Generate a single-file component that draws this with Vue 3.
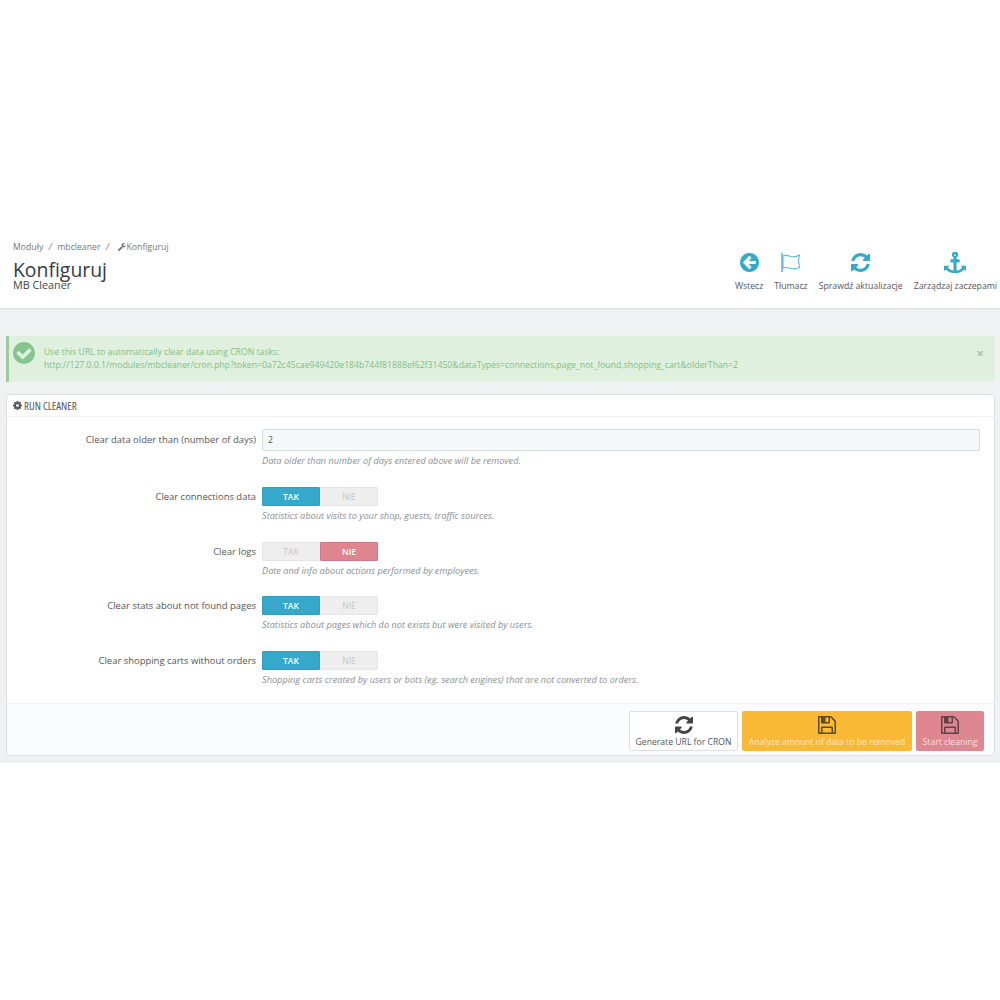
<script setup>
const rows = [
  { label: 'Clear connections data', help: 'Statistics about visits to your shop, guests, traffic sources.', on: true },
  { label: 'Clear logs', help: 'Date and info about actions performed by employees.', on: false },
  { label: 'Clear stats about not found pages', help: 'Statistics about pages which do not exists but were visited by users.', on: true },
  { label: 'Clear shopping carts without orders', help: 'Shopping carts created by users or bots (eg. search engines) that are not converted to orders.', on: true },
]
const sync = 'M1639 1056q0 5-1 7-64 268-268 434.500t-478 166.500q-146 0-282.500-55t-243.500-157l-129 129q-19 19-45 19t-45-19-19-45v-448q0-26 19-45t45-19h448q26 0 45 19t19 45-19 45l-137 137q71 66 161 102t187 36q134 0 250-65t186-179q11-17 53-117 8-23 30-23h192q13 0 22.500 9.500t9.500 22.500zm25-800v448q0 26-19 45t-45 19h-448q-26 0-45-19t-19-45 19-45l138-138q-148-137-349-137-134 0-250 65t-186 179q-11 17-53 117-8 23-30 23h-199q-13 0-22.500-9.500t-9.500-22.500v-7q65-268 270-434.500t480-166.500q146 0 284 55.500t245 156.500l130-129q19-19 45-19t45 19 19 45z'
const floppy = 'M512 1536h768v-384h-768v384zm896 0h128v-896q0-14-10-38.500t-20-34.500l-281-281q-10-10-34-20t-39-10v416q0 40-28 68t-68 28h-576q-40 0-68-28t-28-68v-416h-128v1280h128v-416q0-40 28-68t68-28h832q40 0 68 28t28 68v416zm-384-928v-320q0-13-9.500-22.500t-22.500-9.500h-192q-13 0-22.500 9.500t-9.500 22.500v320q0 13 9.500 22.500t22.500 9.500h192q13 0 22.500-9.500t9.500-22.500zm640 32v928q0 40-28 68t-68 28h-1344q-40 0-68-28t-28-68v-1344q0-40 28-68t68-28h928q40 0 88 20t76 48l280 280q28 28 48 76t20 88z'
</script>

<template>
  <div class="page">
    <header class="head">
      <div class="titles">
        <div class="crumbs">
          <span>Moduły</span><span class="sep">/</span><span>mbcleaner</span><span class="sep">/</span>
          <svg class="wrench" viewBox="128 128 1600 1600"><path d="M448 1472q0-26-19-45t-45-19-45 19-19 45 19 45 45 19 45-19 19-45zm644-420l-682 682q-37 37-90 37-52 0-91-37l-106-108q-38-36-38-90 0-53 38-91l681-681q39 98 114.500 173.500t173.500 114.500zm634-435q0 39-23 106-47 134-164.500 217.500t-258.500 83.500q-185 0-316.500-131.500t-131.500-316.500 131.500-316.500 316.500-131.500q58 0 121.500 16.500t107.500 46.500q16 11 16 28t-16 28l-293 169v224l193 107q5-3 79-48.500t135.500-81 70.500-35.500q15 0 23.500 10t8.500 25z" fill="#777"/></svg>
          <span>Konfiguruj</span>
        </div>
        <h1>Konfiguruj</h1>
        <div class="sub">MB Cleaner</div>
      </div>
      <nav class="tools">
        <a class="tool">
          <svg viewBox="128 128 1536 1536" width="19" height="19"><path d="M1408 960v-128q0-26-19-45t-45-19h-502l189-189q19-19 19-45t-19-45l-91-91q-18-18-45-18t-45 18l-362 362-91 91q-18 18-18 45t18 45l91 91 362 362q18 18 45 18t45-18l91-91q18-18 18-45t-18-45l-189-189h502q26 0 45-19t19-45zm256-64q0 209-103 385.500t-279.500 279.500-385.500 103-385.500-103-279.500-279.500-103-385.500 103-385.500 279.500-279.500 385.500-103 385.500 103 279.500 279.500 103 385.500z" fill="#36a9cb"/></svg>
          <span>Wstecz</span>
        </a>
        <a class="tool">
          <svg viewBox="0 0 20 19" width="20" height="19"><path d="M1 0v19" stroke="#36a9cb" stroke-width="1.300" fill="none"/><path d="M2 3c3-1.500 5-.5 8 .5 3 .8 5.500.3 8.500-1.500l-1 6 1 6.500c-3 1.500-5.500 1.800-8.500 1-3-1-5-1.800-8-.5z" stroke="#5fb9d4" stroke-width="1.100" fill="none"/></svg>
          <span>Tłumacz</span>
        </a>
        <a class="tool">
          <svg viewBox="128 128 1536 1536" width="19" height="19"><path :d="sync" fill="#36a9cb"/></svg>
          <span>Sprawdź aktualizacje</span>
        </a>
        <a class="tool">
          <svg viewBox="0 0 1792 1792" width="22" height="22" class="anchor"><path d="M960 256q0-26-19-45t-45-19-45 19-19 45 19 45 45 19 45-19 19-45zm832 888v352q0 22-20 30-8 2-12 2-12 0-23-9l-93-93q-119 143-318.500 226.500t-429.500 83.500-429.500-83.500-318.500-226.500l-93 93q-9 9-23 9-4 0-12-2-20-8-20-30v-352q0-14 9-23t23-9h352q22 0 30 20 8 19-7 35l-100 100q67 91 189.500 153.500t271.500 82.500v-647h-192q-26 0-45-19t-19-45v-128q0-26 19-45t45-19h192v-163q-58-34-93-92.500t-35-128.500q0-106 75-181t181-75 181 75 75 181q0 70-35 128.500t-93 92.500v163h192q26 0 45 19t19 45v128q0 26-19 45t-45 19h-192v647q149-20 271.500-82.500t189.500-153.500l-100-100q-15-16-7-35 8-20 30-20h352q14 0 23 9t9 23z" fill="#36a9cb"/></svg>
          <span>Zarządzaj zaczepami</span>
        </a>
      </nav>
    </header>

    <main class="content">
      <div class="alert">
        <svg class="check" viewBox="128 128 1536 1536" width="22" height="22"><path d="M1412 734q0-28-18-46l-91-90q-19-19-45-19t-45 19l-408 407-226-226q-19-19-45-19t-45 19l-91 90q-18 18-18 46 0 27 18 45l362 362q19 19 45 19 27 0 46-19l543-543q18-18 18-45zm252 162q0 209-103 385.500t-279.500 279.500-385.500 103-385.500-103-279.500-279.500-103-385.500 103-385.500 279.500-279.500 385.500-103 385.500 103 279.500 279.500 103 385.500z" fill="#86c48f"/></svg>
        <div class="alert-text">
          <div>Use this URL to automatically clear data using CRON tasks:</div>
          <div>http://127.0.0.1/modules/mbcleaner/cron.php?token=0a72c45cae949420e184b744f81888ef62f31450&amp;dataTypes=connections,page_not_found,shopping_cart&amp;olderThan=2</div>
        </div>
        <span class="close">×</span>
      </div>

      <section class="panel">
        <div class="panel-head">
          <svg viewBox="128 128 1536 1536" width="9" height="9"><path d="M1152 896q0-106-75-181t-181-75-181 75-75 181 75 181 181 75 181-75 75-181zm512-109v222q0 12-8 23t-20 13l-185 28q-19 54-39 91 35 50 107 138 10 12 10 25t-9 23q-27 37-99 108t-94 71q-12 0-26-9l-138-108q-44 23-91 38-16 136-29 186-7 28-36 28h-222q-14 0-24.500-8.500t-11.500-21.500l-28-184q-49-16-90-37l-141 107q-10 9-25 9-14 0-25-11-126-114-165-168-7-10-7-23 0-12 8-23 15-21 51-66.500t54-70.500q-27-50-41-99l-183-27q-13-2-21-12.500t-8-23.500v-222q0-12 8-23t19-13l186-28q14-46 39-92-40-57-107-138-10-12-10-24 0-10 9-23 26-36 98.500-107.500t94.500-71.500q13 0 26 10l138 107q44-23 91-38 16-136 29-186 7-28 36-28h222q14 0 24.500 8.500t11.500 21.500l28 184q49 16 90 37l142-107q9-9 24-9 13 0 25 10 129 119 165 170 7 8 7 22 0 12-8 23-15 21-51 66.500t-54 70.500q26 50 41 98l183 28q13 2 21 12.500t8 23.500z" fill="#555"/></svg>
          <span>RUN CLEANER</span>
        </div>

        <div class="form">
          <div class="row first">
            <label>Clear data older than (number of days)</label>
            <div class="field">
              <div class="input">2</div>
              <p class="help">Data older than number of days entered above will be removed.</p>
            </div>
          </div>
          <div class="row" v-for="r in rows" :key="r.label">
            <label>{{ r.label }}</label>
            <div class="field">
              <div class="switch">
                <span class="opt" :class="{ yes: r.on }">TAK</span>
                <span class="opt" :class="{ no: !r.on }">NIE</span>
              </div>
              <p class="help">{{ r.help }}</p>
            </div>
          </div>
        </div>

        <div class="panel-foot">
          <button class="btn plain">
            <svg viewBox="128 128 1536 1536" width="18" height="18"><path :d="sync" fill="#444"/></svg>
            <span>Generate URL for CRON</span>
          </button>
          <button class="btn amber">
            <svg viewBox="128 128 1536 1536" width="18" height="18"><path :d="floppy" fill="#5b4a2a"/></svg>
            <span>Analyze amount of data to be removed</span>
          </button>
          <button class="btn rose">
            <svg viewBox="128 128 1536 1536" width="18" height="18"><path :d="floppy" fill="#5e4247"/></svg>
            <span>Start cleaning</span>
          </button>
        </div>
      </section>
    </main>
  </div>
</template>

<style>
html, body { margin: 0; background: #fff; }
</style>

<style scoped>
.page {
  width: 1000px;
  height: 1000px;
  padding-top: 230px;
  box-sizing: border-box;
  font-family: "Open Sans", "Noto Sans", sans-serif;
  color: #555;
  font-size: 8.650px;
  background: #fff;
}
.head {
  height: 79px;
  box-sizing: border-box;
  border-bottom: 1px solid #dfe1e3;
  display: flex;
  justify-content: space-between;
  padding: 10px 3px 0 13px;
}
.crumbs {
  display: flex;
  align-items: center;
  height: 14px;
  color: #777;
  font-size: 8.700px;
}
.sep { margin: 0 5.500px; font-style: italic; }
.wrench { width: 8px; height: 8px; margin: 0 1px 0 3px; }
h1 {
  margin: 6px 0 0;
  font-size: 19.400px;
  line-height: 20px;
  font-weight: 400;
  color: #363a41;
}
.sub { font-size: 10.800px; line-height: 10px; color: #444; }
.tools { display: flex; gap: 11px; padding-top: 13px; }
.tool {
  display: flex;
  flex-direction: column;
  align-items: center;
  color: #555;
  font-size: 8.700px;
  line-height: 12px;
}
.tool svg { height: 19px; margin-bottom: 8px; }
.tool svg.anchor { height: 22px; margin: -1px 0 6px; }
.content {
  background: #eff1f2;
  height: 454px;
  box-sizing: border-box;
  padding: 27px 5px 0 6px;
}
.alert {
  height: 46px;
  box-sizing: border-box;
  background: #dff0de;
  border-left: 3px solid #9ccba0;
  display: flex;
  align-items: center;
  padding: 0 12px 0 4px;
  color: #7fbf85;
  font-size: 8.690px;
  line-height: 13px;
  position: relative;
}
.check { align-self: flex-start; margin: 6px 9px 0 0; flex: none; }
.alert-text { flex: 1; }
.close { position: absolute; right: 11px; top: 10px; font-size: 13px; line-height: 14px; color: #a9bfae; font-weight: 700; }
.panel {
  margin-top: 12px;
  height: 362px;
  box-sizing: border-box;
  background: #fff;
  border: 1px solid #dcdfe1;
  border-radius: 4px;
  display: flex;
  flex-direction: column;
}
.panel-head {
  height: 21px;
  flex: none;
  border-bottom: 1px solid #eef0f1;
  display: flex;
  align-items: center;
  gap: 2px;
  padding-left: 6px;
  font-size: 11px;
  font-stretch: condensed;
  color: #555;
}
.form { flex: 1; min-height: 0; padding-top: 12px; }
.row {
  display: grid;
  grid-template-columns: 249px 718px;
  column-gap: 6px;
  height: 54.600px;
}
.row.first { height: 58px; }
label {
  text-align: right;
  font-size: 9.450px;
  line-height: 20px;
  color: #555;
}
.first label { line-height: 22px; }
.input {
  height: 22px;
  box-sizing: border-box;
  border: 1px solid #d3dde3;
  border-radius: 2px;
  background: #f5f8f9;
  padding: 0 5px;
  line-height: 20px;
  font-size: 8.650px;
}
.switch {
  width: 116px;
  height: 19px;
  display: flex;
  background: #eee;
  border-radius: 2px;
  box-shadow: 0 0 0 1px #e4e4e4 inset;
}
.opt {
  flex: 1;
  text-align: center;
  line-height: 19px;
  color: #c6c6c6;
  font-size: 8.500px;
  border-radius: 2px;
}
.opt.yes { background: #36a9cb; color: #fff; font-weight: 600; box-shadow: 0 0 0 1px #2f9dbd inset; }
.opt.no { background: #df8590; color: #fff; font-weight: 600; box-shadow: 0 0 0 1px #cf7682 inset; }
.help {
  margin: 3px 0 0;
  font-size: 9.200px;
  line-height: 13px;
  font-style: italic;
  color: #8a8f93;
}
.panel-foot {
  height: 52px;
  flex: none;
  box-sizing: border-box;
  background: #fbfcfd;
  border-top: 1px solid #eef0f1;
  border-radius: 0 0 4px 4px;
  display: flex;
  justify-content: flex-end;
  gap: 4px;
  padding: 7px 10px 0 0;
}
.btn {
  height: 40px;
  box-sizing: border-box;
  border: 1px solid transparent;
  border-radius: 2px;
  font-family: inherit;
  font-size: 8.650px;
  line-height: 12px;
  display: flex;
  flex-direction: column;
  align-items: center;
  padding: 4px 0 0;
  gap: 2px;
}
.plain { width: 109px; background: #fff; border-color: #dcdfe1; color: #555; }
.amber { width: 170px; background: #f9b935; color: #fbe9bc; }
.rose { width: 68px; background: #df8791; color: #f8dfe2; }
</style>
